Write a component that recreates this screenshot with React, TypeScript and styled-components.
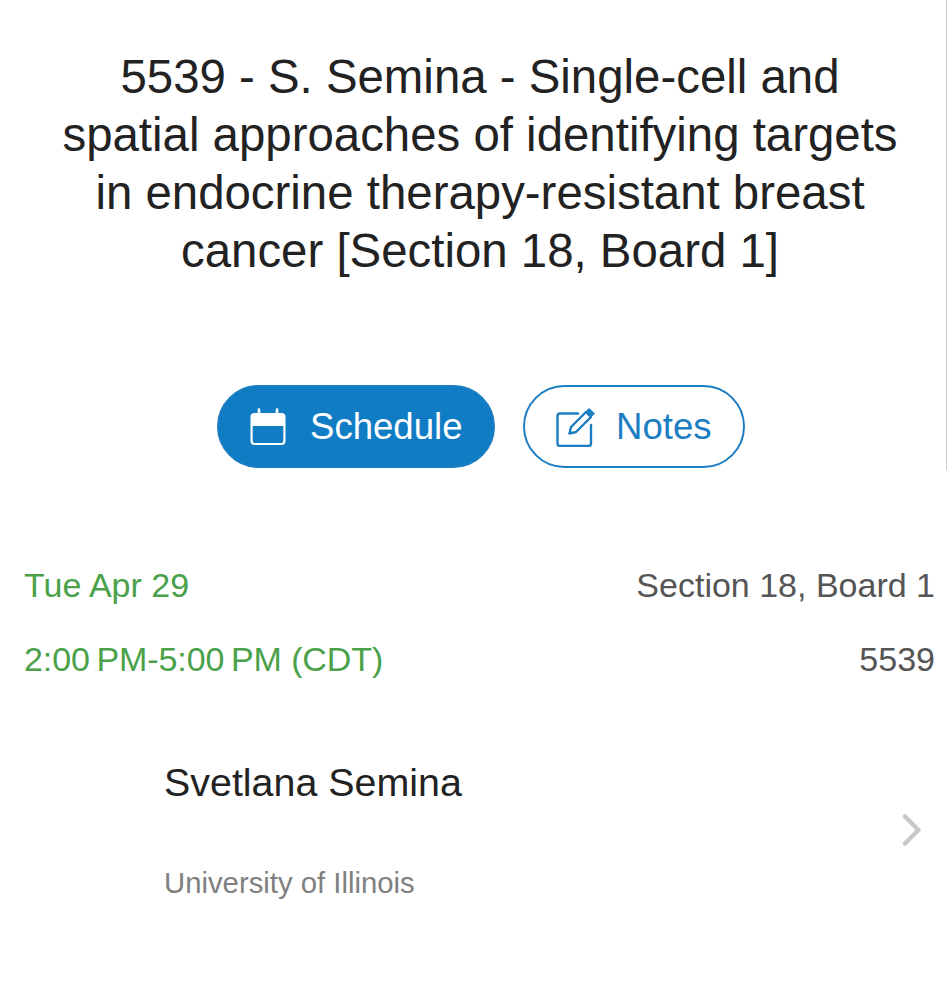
import styled, { createGlobalStyle } from "styled-components";

const GlobalStyle = createGlobalStyle`
  html, body {
    margin: 0;
    padding: 0;
    background: #fff;
    overflow: hidden;
  }
  * {
    box-sizing: border-box;
  }
`;

function CalendarIcon() {
  return (
    <svg width="36" height="38" viewBox="0 0 36 38" fill="none">
      <path
        d="M9 1.500v5M27 1.500v5"
        stroke="#fff"
        strokeWidth="2.600"
        strokeLinecap="round"
      />
      <path d="M4.500 5h27a4 4 0 0 1 4 4v8H.5V9a4 4 0 0 1 4-4z" fill="#fff" />
      <path
        d="M1.600 17h32.800v16a3 3 0 0 1-3 3H4.600a3 3 0 0 1-3-3z"
        stroke="#fff"
        strokeWidth="2.200"
      />
    </svg>
  );
}

function NotesIcon() {
  return (
    <svg width="40" height="40" viewBox="0 0 40 40" fill="none">
      <path
        d="M22 6.500H4a2.500 2.500 0 0 0-2.500 2.500v27.500a2.500 2.500 0 0 0 2.500 2.500h28.500a2.500 2.500 0 0 0 2.500-2.500V18"
        stroke="#1b7dc2"
        strokeWidth="2.400"
        strokeLinecap="round"
      />
      <path
        d="M15 20L30 5l5 5-15 15-6.500 1.500z"
        stroke="#1b7dc2"
        strokeWidth="2.400"
        strokeLinejoin="round"
      />
      <path d="M33 1l6 5.500-4 4-6-5.500z" fill="#1b7dc2" />
    </svg>
  );
}

function Chevron() {
  return (
    <svg width="20" height="32" viewBox="0 0 20 32" fill="none">
      <path
        d="M3 2.500L16.500 16 3 29.500"
        stroke="#c8c8c8"
        strokeWidth="4.500"
        strokeLinecap="round"
        strokeLinejoin="round"
      />
    </svg>
  );
}

export default function App() {
  return (
    <Page>
      <GlobalStyle />
      <Scrollbar />
      <Title>
        5539 - S. Semina - Single-cell and
        <br />
        spatial approaches of identifying targets
        <br />
        in endocrine therapy-resistant breast
        <br />
        cancer [Section 18, Board 1]
      </Title>
      <Actions>
        <PillButton $filled>
          <CalendarIcon />
          Schedule
        </PillButton>
        <PillButton>
          <NotesIcon />
          Notes
        </PillButton>
      </Actions>
      <Details>
        <DetailRow>
          <When>Tue Apr 29</When>
          <Where>Section 18, Board 1</Where>
        </DetailRow>
        <DetailRow>
          <TimeRange>2:00&#8201;PM-5:00&#8201;PM (CDT)</TimeRange>
          <Where>5539</Where>
        </DetailRow>
      </Details>
      <Speaker>
        <SpeakerInfo>
          <SpeakerName>Svetlana Semina</SpeakerName>
          <SpeakerOrg>University of Illinois</SpeakerOrg>
        </SpeakerInfo>
        <Chevron />
      </Speaker>
    </Page>
  );
}

const Page = styled.main`
  position: relative;
  width: 947px;
  height: 1000px;
  padding-top: 48px;
  background: #fff;
  font-family: "Liberation Sans", Arial, sans-serif;
  overflow: hidden;
`;

const Scrollbar = styled.div`
  position: absolute;
  top: 0;
  right: 0;
  width: 1px;
  height: 470px;
  background: #cfcfcf;
`;

const Title = styled.h1`
  margin: 0;
  padding-left: 13px;
  font-size: 47.4px;
  font-weight: 400;
  line-height: 58px;
  color: #222;
  text-align: center;
  white-space: nowrap;
`;

const Actions = styled.div`
  display: flex;
  gap: 28px;
  margin-top: 105px;
  padding-left: 217px;
`;

const PillButton = styled.div<{ $filled?: boolean }>`
  display: flex;
  align-items: center;
  gap: ${(p) => (p.$filled ? "24px" : "20px")};
  height: 83px;
  width: ${(p) => (p.$filled ? "278px" : "222px")};
  padding-left: 31px;
  border: 2px solid #1b7dc2;
  border-radius: 42px;
  font-size: 36.6px;
  color: ${(p) => (p.$filled ? "#fff" : "#1b7dc2")};
  background: ${(p) => (p.$filled ? "#0f7cc4" : "#fff")};
`;

const Details = styled.section`
  display: flex;
  flex-direction: column;
  gap: 36px;
  margin-top: 98px;
  padding: 0 12px 0 24px;
`;

const DetailRow = styled.div`
  display: flex;
  justify-content: space-between;
  height: 38px;
  line-height: 38px;
  font-size: 34px;
`;

const When = styled.span`
  color: #4aa14a;
`;

const TimeRange = styled(When)`
  letter-spacing: -0.1px;
`;

const Where = styled.span`
  color: #555;
`;

const Speaker = styled.section`
  display: flex;
  align-items: center;
  justify-content: space-between;
  margin-top: 82px;
  padding: 0 25px 0 164px;
`;

const SpeakerInfo = styled.div`
  display: flex;
  flex-direction: column;
  gap: 63px;
`;

const SpeakerName = styled.div`
  font-size: 39.4px;
  line-height: 44px;
  color: #222;
`;

const SpeakerOrg = styled.div`
  font-size: 29.3px;
  line-height: 32px;
  color: #808080;
`;
